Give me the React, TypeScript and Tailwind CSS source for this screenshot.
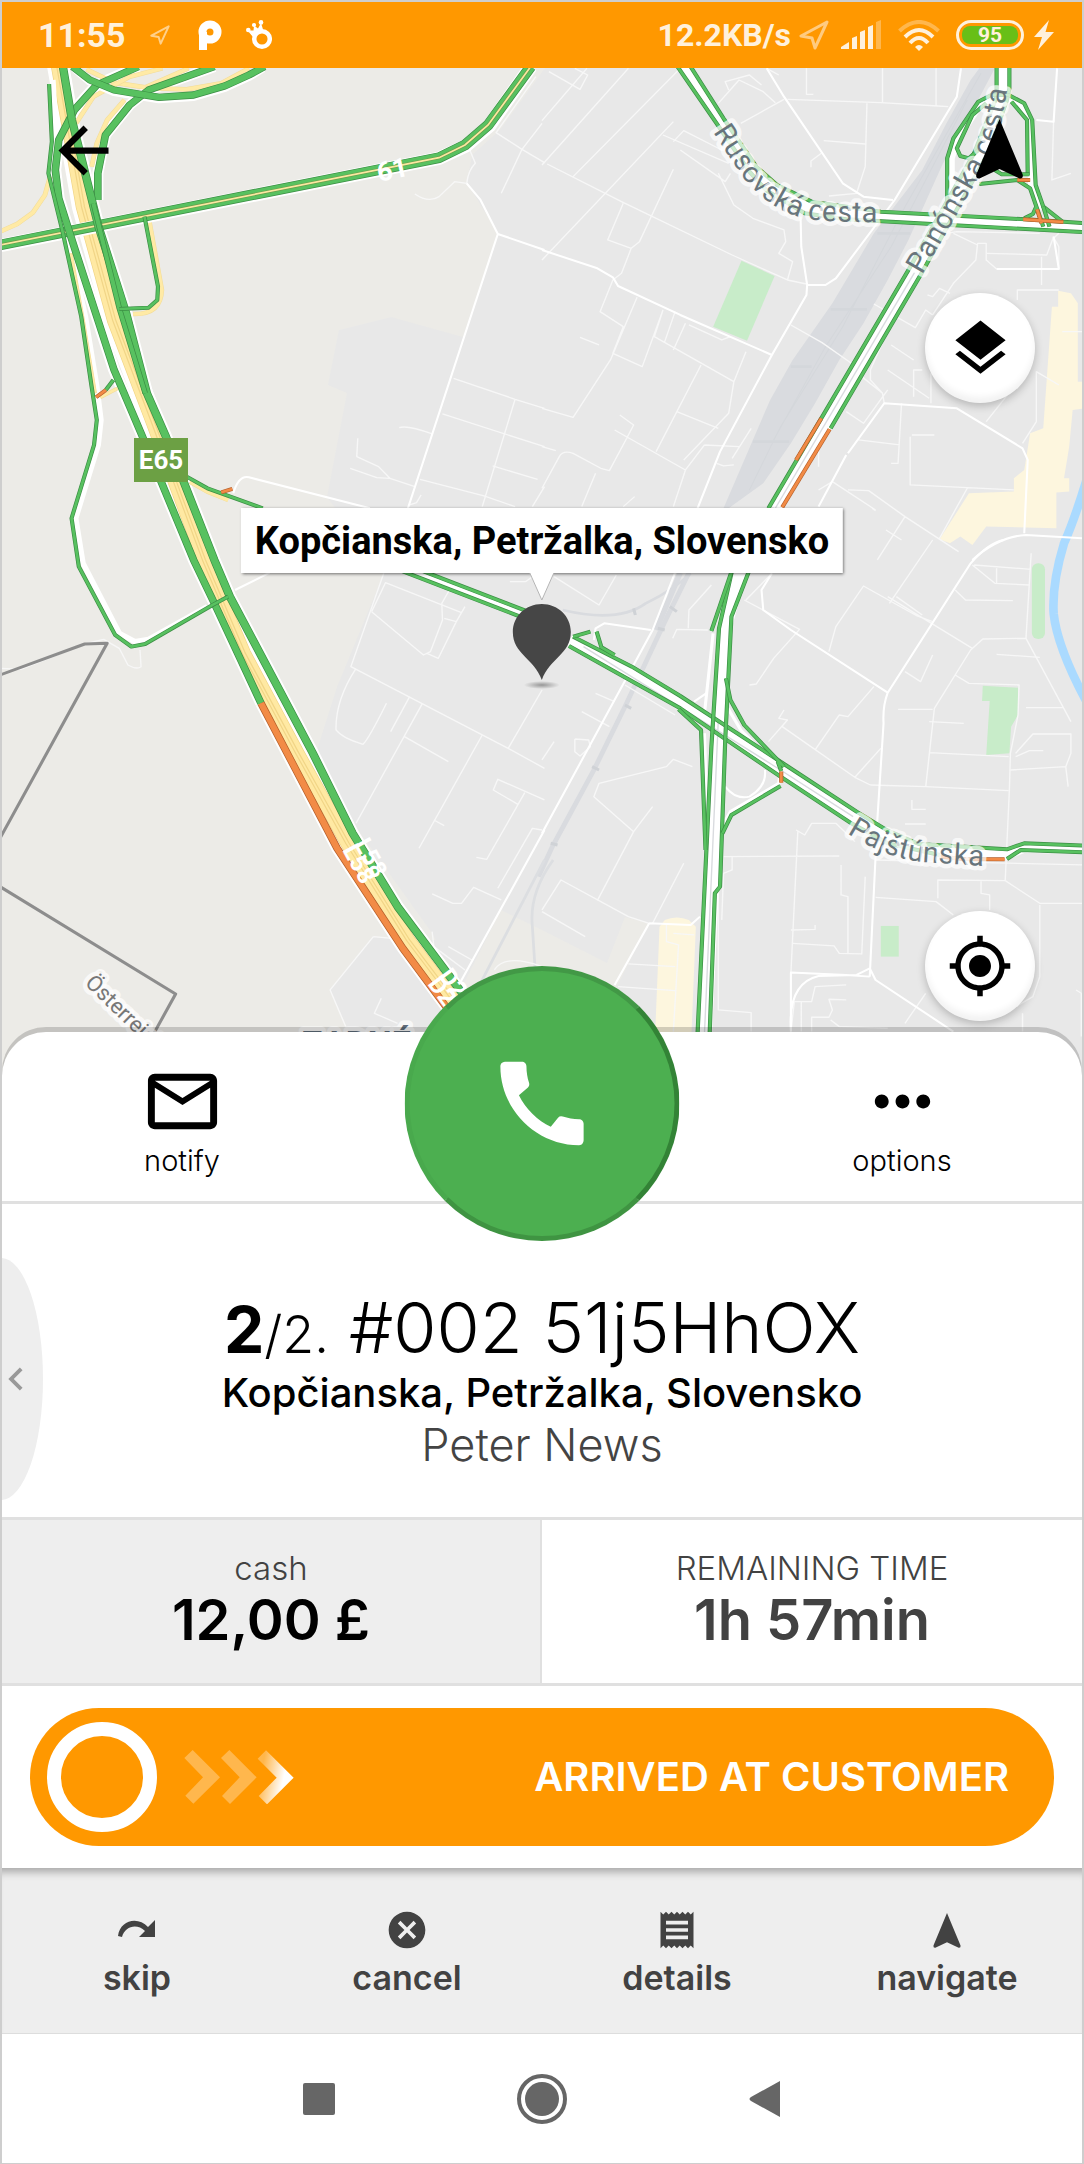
import React from "react";
import {
  MdArrowBack,
  MdCall,
  MdCancel,
  MdChevronLeft,
  MdLayers,
  MdMailOutline,
  MdMoreHoriz,
  MdMyLocation,
  MdReceipt,
} from "react-icons/md";

const GREEN = "#58c160";
const GREEN_EDGE = "#3b8d44";
const ORANGE = "#f28b46";
const ORANGE_EDGE = "#b5602b";

/* The map is drawn in four tiles, each with its own survey grid. */
const TILES = {
  nw: "translate(0 60) scale(0.3457 0.3333)",
  ne: "translate(542 60) scale(0.3457 0.3333)",
  sw: "translate(0 540) scale(0.3457 0.3333)",
  se: "translate(542 540) scale(0.3457 0.3333)",
};

/* Motorway lanes, in the north-west tile's grid */
const MEDIAN = "M160 -30 240 440 330 780 440 1080 590 1500 705 1780 860 2080 1005 2350 1180 2640 1450 3010";
const LANE_WEST = "M400 20 280 75 215 150 170 240 160 330 170 415 205 530 330 930 410 1125 560 1500 620 1630 755 1930";
const LANE_WEST_JAM = "M755 1930 975 2365 1165 2665 1290 2840 1440 3020";
const LANE_EAST = "M182 20 208 180 285 500 365 760 425 1000 480 1130 620 1500 665 1610 905 2080 1020 2320 1150 2540 1330 2790 1500 3020";
const LANE_RAMP = "M620 20 430 90 375 135 305 225 283 340 283 420";

type LineProps = { d: string; w?: number; jam?: boolean };

function Traffic({ d, w = 12, jam = false }: LineProps) {
  return (
    <g fill="none" strokeLinejoin="round">
      <path d={d} stroke={jam ? ORANGE_EDGE : GREEN_EDGE} strokeWidth={w} />
      <path d={d} stroke={jam ? ORANGE : GREEN} strokeWidth={w - 4} />
    </g>
  );
}

function Casing({ d, w = 12 }: LineProps) {
  return <path d={d} fill="none" stroke="#ffffff" strokeWidth={w} strokeLinejoin="round" />;
}

function Ramp({ d, w = 11 }: LineProps) {
  return (
    <g fill="none" strokeLinejoin="round">
      <path d={d} stroke="#f2dc9a" strokeWidth={w + 3} />
      <path d={d} stroke="#ffeaa5" strokeWidth={w} />
    </g>
  );
}

function MapCanvas() {
  return (
    <svg
      className="absolute inset-0 h-full w-full"
      viewBox="2 68 1080 1008"
      preserveAspectRatio="xMidYMid slice"
      aria-hidden="true"
    >
      <rect x="0" y="60" width="1084" height="1020" fill="#ecebe7" />
      <path
        d="M545 68 500 130 472 155 467 183 498 233 463 337 391 317 339 330 328 385 347 393 327 497 384 573 337 687 316 753 353 823 432 933 463 990 480 1080 1084 1080V68Z"
        fill="#e8e8e8"
      />
      <path d="M373 937 330 990 353 1040 353 1080 480 1080 440 940 400 940Z" fill="#e8e8e8" />
      <path d="M501 910 542 930 607 963 625 917 649 923 600 1020 463 1020 463 985Z" fill="#ecebe7" />

      {/* parks, built-up blocks and water */}
      <g transform={TILES.ne}>
        <path d="M577 602 673 648 593 842 495 800Z" fill="#c8ecc9" />
        <path
          d="M1493 692 1530 700 1550 730V965H1575V1045L1535 1050 1525 1160 1510 1255H1525V1295L1488 1298V1405L1285 1400 1245 1455 1210 1430 1180 1450 1150 1438 1235 1300 1365 1295V1255L1395 1230 1412 1120 1450 1105 1475 740H1493Z"
          fill="#fdf6de"
        />
        <path
          d="M1240 60 1265 25H1310L1200 240 1160 310 1060 540 1000 660 930 790 860 900 790 1030 720 1150 640 1270 540 1345H525L610 1140 660 1020 725 900 840 730 960 520 1100 330 1170 190Z"
          fill="#d9dbdf"
        />
        <g fill="none" stroke="#d4d7db" strokeWidth="3">
          <path d="M1270 40 1050 440 870 800 690 1100 600 1290M1230 120 1010 560 820 860 670 1140" />
          <path d="M835 748H940M970 520H1065M720 920H780M610 1145H715" strokeWidth="8" />
        </g>
      </g>
      <g transform={TILES.se}>
        <rect x="1417" y="70" width="38" height="227" rx="18" fill="#c8ecc9" />
        <path d="M1275 437 1377 443V525L1357 560 1352 640 1285 645 1295 483H1273Z" fill="#c8ecc9" />
        <rect x="980" y="1158" width="52" height="92" fill="#c8ecc9" />
        <path d="M355 1140Q390 1125 425 1140L445 1160 430 1540H325L340 1160Z" fill="#fdf6de" />
        <path d="M1575 -180Q1540 -60 1510 10 1475 130 1480 220 1490 320 1575 485" fill="none" stroke="#aadaff" strokeWidth="25" />
        <g fill="none" stroke="#d9dbdf" strokeWidth="14">
          <path d="M425 98 360 235 240 500 150 690 30 920 -10 1010" />
          <path d="M60 210Q220 250 300 190 380 150 430 100" strokeWidth="8" />
          <path d="M400 98 330 270" strokeWidth="16" />
        </g>
        <path d="M370 200 390 215M335 265 355 270M240 495 258 505M145 680 165 690M25 910 45 915M265 205 270 225" stroke="#cfd2d6" strokeWidth="9" />
      </g>
      <g transform={TILES.sw} fill="none" stroke="#dcdee1" strokeWidth="8">
        <path d="M1575 960 1460 1190 1380 1350M1600 960Q1530 1060 1540 1160L1548 1290" />
      </g>

      {/* side streets */}
      <g fill="none" stroke="#f7f7f7" strokeWidth="4" strokeLinejoin="round">
        <g transform={TILES.nw}>
          <path d="M1550 50 1435 218 1510 268 1575 308M1568 190 1510 268 1450 400" />
          <path d="M1350 370Q1355 330 1375 310L1355 260M1350 370 1315 365 1270 410Q1240 430 1200 402" />
          <path d="M1312 955 1490 1018 1575 1045M1280 1062 1575 1160M1490 1018 1395 1340M1155 1103Q1180 1095 1250 1122" />
          <path d="M1035 1135 1032 1190 1095 1220 1128 1255 1090 1253 1013 1225M1128 1255 1200 1280M1215 1258 1400 1308 1490 1340M1425 1218 1555 1258M1185 1335 1205 1328 1218 1305M1575 1280 1540 1340" />
        </g>
        <g transform={TILES.ne}>
          <path d="M250 25 0 315M400 25 90 350M0 182 130 25M20 35 110 88 132 45 95 25M15 312 230 425 550 585 710 660 765 672" />
          <path d="M380 185 0 600M350 225 540 310M380 245 410 212 520 270M400 270 530 365 545 340M510 340 555 435 610 475 700 510 705 545 685 580 725 605 710 660" />
          <path d="M235 430 190 540 258 565 282 545 380 328M258 565 230 640 205 660 168 755 235 800 205 880 290 920 350 750M275 712 198 900 90 1072 0 1045M110 832 165 855M350 750 325 830 555 965 590 875M460 915 330 1175M385 755 355 845M415 790 380 870M425 795 520 840 545 830M555 965 540 1060 410 1200" />
          <path d="M0 1160 40 1172M210 1110 415 1230M225 1065 265 1095 245 1135M390 1055 510 1105M245 1135 195 1232 170 1225 90 1180Q60 1170 50 1190L0 1285M415 1230 380 1340M470 1155 415 1230M505 1210 525 1218 555 1215M550 1195 605 1105M115 1340 155 1240M235 1340 268 1310M470 1155 570 1160" />
          <path d="M710 118 980 128 1145 138 1175 140M985 25V128M940 130 935 320 910 400 830 408M765 25V103H785M815 242 935 252M808 280 778 303V322M1140 25V138M575 190 700 118M510 130 570 60 640 95 675 128M540 90 530 65 600 45 635 75M650 25 685 45" />
          <path d="M720 795 810 848 895 910M960 732 1080 803 1110 750 1130 765M1115 705 1130 710 1150 685 1180 700M1130 765 1190 670 1255 600 1260 550H1285V600L1315 627M1010 790 950 930V960L985 1000 990 1030M925 950 985 1000M880 1055 930 1090 1000 990M1010 855 1075 900M1000 930 1120 1015M1075 1010V930H1100M1125 1030V940M1285 1085 1350 1000M1070 1125H1135M1040 1030 1030 1210H1010M915 1140 1035 1155" />
          <path d="M1495 625 1495 560 1478 530M1170 520 1200 515 1440 520M1190 520 1260 555M1285 580 1460 585 1480 530M1445 675V590M1480 535 1495 520M1375 720V690H1495M1430 1085V935L1495 975M1430 1085 1390 1150M1505 815H1568M1530 340 1475 360 1480 180M1065 1130 1065 1275 1365 1290M1230 1285 1150 1435M1050 1370 970 1500M885 1290 945 1292 1050 1370 1205 1475M800 1290 840 1265 965 1350M800 1140 800 1220M955 1345 965 1352M995 1410 1040 1440" />
        </g>
        <g transform={TILES.sw}>
          <path d="M1110 100 1015 380 1470 625 1575 685M1075 215 1115 128 1335 218M1075 215 1225 345 1245 335 1280 240 1278 190 1300 150M1235 340 1268 355 1320 245 1285 235M1320 245 1345 200M1030 385Q970 480 972 570 990 595 1050 613 1065 600 1118 490" />
          <path d="M1185 470 1130 575M1222 490 1030 850M1170 590 1297 665M1395 585 1212 925M1470 625 1568 450M1575 780 1440 718 1427 750 1498 793M1518 758 1408 958 1378 952M1255 840 1285 857M1568 870 1540 865 1440 1045M1250 1062 1310 1090 1335 1090 1370 1042 1450 1080" />
          <path d="M1250 1175 1255 1220 1345 1290M1297 1220 1365 1260M1080 1190 955 1350 1000 1460M1080 1190 1180 1200M1103 1375 1083 1420 1150 1450M1430 1290Q1460 1240 1568 1280M1475 125H1520L1540 110M0 385 60 388 250 310 300 298 345 325 370 375Q395 390 408 380L405 330" />
        </g>
        <g transform={TILES.se}>
          <path d="M35 110 165 195 215 105M490 135 425 210 423 265M378 295 390 268 480 270M590 180 665 100M585 180 745 268 670 355 620 432 600 435M830 335 850 260 930 138 1085 228 1130 245M1005 190 1130 0M1025 170 1100 225M1245 325 1000 170" />
          <path d="M1245 75 1310 130 1410 135M1250 75 1415 88M1315 130V85M1195 150 1225 180 1362 182M1400 295 1275 297 1240 330 1135 505 1110 740M1400 295 1530 545M1415 40 1400 295M1195 405 1235 430 1380 435 1377 525 1355 640 1352 750 1340 1020M1120 545 1220 550M1030 508H1130M1400 503H1510M1120 638 1350 650" />
          <path d="M1370 640 1420 582H1530V640L1515 680 1355 690M1515 680 1522 740M1370 650 1410 632H1450M1110 740 1350 752M950 735 1110 740M700 510 685 535 710 540 655 605M695 560 905 712 980 625M905 712 950 735M790 630 860 525 885 530 960 440M1315 343 1440 352M1050 395 1095 425 1130 345" />
          <path d="M1145 1075 1145 1020 1340 1022 1440 1090 1568 1090M965 1072 1140 1085 1190 1125M1270 1022V1060L1295 1065V1110M965 960 1568 975M525 950 860 948M550 950V990L525 1000 520 1140M740 875 720 1300M865 975V1065L885 1070V1240M735 870 760 885 780 850H850L905 905M1070 780V808H1110M1050 852H1110" />
          <path d="M725 1210 845 1218 860 1240 925 1242 935 1010M720 1170 790 1168V1155M0 1110 55 1020 250 1130 310 1150M0 1115 125 1190M160 1082 265 875 150 770 165 730 360 680 380 658 435 680M265 875 320 800M115 515 195 560M95 597 135 600 140 620 110 648 95 635V597M0 660 35 605M320 1150 410 970M155 460 210 485M240 435 385 525" />
          <path d="M510 1060V1410L605 1418V1475M720 1475 730 1385 780 1385 790 1340 880 1335M780 1475V1432H830L840 1410 830 1378 880 1380M750 1475V1385M835 1440 860 1460 1000 1465M1110 1360 1050 1450M1440 1095V1310L1420 1370 1370 1400M250 1272 385 1280M220 1340 385 1352M360 1155V1205L395 1215 380 1475M380 1180 440 1185M1545 1350 1560 1360V1490M1390 1420V1475" />
        </g>
      </g>

      {/* collector roads */}
      <g fill="none" stroke="#ffffff" strokeWidth="6" strokeLinejoin="round">
        <path transform={TILES.nw} d="M1350 370 1390 420 1440 522 1575 570M1440 522 1180 1345M675 1300Q690 1245 720 1252L1070 1345" />
        <path transform={TILES.ne} d="M0 570 160 625 205 652 220 678 400 765 665 885M665 885 765 705 767 675 750 560 748 470M767 675H820L850 655 1020 420 1200 110 1212 25M650 25 700 110 870 370 930 410 1015 420M665 885 515 1175 450 1345M1490 25 1480 185 1430 180M885 1180 990 1030 1200 1045 1390 1165 1405 1200 1395 1420M880 1185 800 1340M1245 1500Q1320 1430 1400 1425L1568 1435M1315 627 1495 627 1480 530" />
        <path transform={TILES.sw} d="M1575 870 1330 1330M680 150 780 98" />
        <path transform={TILES.se} d="M385 98 320 270 0 880M665 100 635 150 640 210 720 270 1000 458 1240 70Q1290 10 1335 0M1000 458Q985 500 988 550L970 840 948 1310M310 1150 210 1335M310 1150 430 1155 457 1130M150 300 155 265 180 250 315 270M720 1475Q710 1330 800 1308L910 1305 948 1285 965 1320 1190 1475M948 1310 880 1305 720 1298V1475M530 740Q560 780 600 770 650 740 645 690M440 485 475 460" />
      </g>

      {/* national border */}
      <g transform={TILES.sw} fill="none" stroke="#8d8d8d" strokeWidth="9" strokeLinejoin="round">
        <path d="M0 405 245 312 310 310 0 895M0 1040 508 1362 440 1490" />
      </g>

      {/* motorway */}
      <g transform={TILES.nw}>
        <Casing d={MEDIAN} w={64} />
        <Casing d={LANE_WEST} w={34} />
        <Casing d={LANE_WEST_JAM} w={34} />
        <Casing d={LANE_EAST} w={36} />
        <Casing d={LANE_RAMP} w={32} />
        <g fill="none" strokeLinejoin="round">
          <path d={MEDIAN} stroke="#f1d587" strokeWidth="42" />
          <path d={MEDIAN} stroke="#ffe9a3" strokeWidth="38" />
          <path d={MEDIAN} stroke="#f1d587" strokeWidth="12" />
          <path d={MEDIAN} stroke="#ffe9a3" strokeWidth="5" />
        </g>
        <Casing d="M153 60 163 245 155 340 192 510 247 770 280 980 292 1080 284 1155 219 1375 240 1510 345 1720 390 1745 430 1738 600 1640" w={16} />
        <Ramp d="M0 515 50 492 95 458 130 405 145 350" />
        <Ramp d="M250 28 330 68 420 82 545 25" />
        <Ramp d="M470 25 375 50 270 110 220 190" />
        <Ramp d="M720 25 640 70 540 88 420 84" />
        <Ramp d="M360 120 310 180 280 250 265 320" />
        <Ramp d="M432 485 468 690Q465 765 385 762" />
        <Ramp d="M205 580 240 780 275 1000M290 1012 340 985" w={8} />
        <Ramp d="M550 1265 600 1295 660 1320" />
        <Casing d="M0 557 1270 295 1347 258 1415 198 1535 20" w={40} />
        <Traffic d="M0 555 1270 293 1345 255 1412 195 1535 20" w={32} />
        <path d="M0 555 1270 293 1345 255 1412 195 1535 20" fill="none" stroke="#6b9a4b" strokeWidth="9" />
        <path d="M0 555 1270 293 1345 255 1412 195 1535 20" fill="none" stroke="#fbe8a0" strokeWidth="5" />
        <Casing d="M215 24 260 64 330 95 460 117 560 110 650 83 720 50 760 24" w={26} />
        <Traffic d={LANE_WEST} w={22} />
        <Traffic d={LANE_RAMP} w={22} />
        <Traffic d={LANE_EAST} w={24} />
        <Traffic d="M270 430 345 745 420 1000" w={16} />
        <Traffic d="M210 20 260 60 330 90 460 112 560 105 650 78 720 45 765 20" w={22} />
        <Traffic d={LANE_WEST_JAM} w={22} jam />
        <Traffic d="M142 72 150 245 140 340 180 510 235 770 265 980 280 1080 272 1155 207 1375 228 1520 333 1725 380 1760 420 1752 615 1635 660 1610" />
        <Traffic d="M418 470 457 680 455 720 430 743 345 747" />
        <Traffic d="M328 960 306 990" />
        <Traffic d="M306 990 278 1012" jam />
        <Traffic d="M540 1250 600 1285 760 1345" />
        <Traffic d="M640 1297 672 1287" jam />
      </g>

      {/* Kopčianska / Pajštúnska */}
      <g transform={TILES.sw}>
        <Casing d="M1195 92 1510 220" w={22} />
        <Traffic d="M1160 92 1510 232" />
        <Traffic d="M1220 92 1520 212" />
      </g>
      <g transform={TILES.se}>
        <Casing d="M80 300 400 485 700 690 910 835 1000 890 1100 930 1345 942 1395 922 1575 927" w={32} />
        <Casing d="M572 90 530 250 510 600 470 1480" w={44} />
        <Casing d="M535 500 575 570 690 690 685 730 545 815 520 860M495 280 470 520M470 580 480 930" w={9} />
        <path d="M120 320 690 690 900 830M510 540 470 1480" fill="none" stroke="#d9dbdf" strokeWidth="4" />
        <Traffic d="M90 290 260 380 400 468 700 672 910 815 1000 872 1090 912 1345 928 1395 910 1575 917" />
        <Traffic d="M78 318 400 505 690 710 895 850 1000 910 1150 945" />
        <Traffic d="M90 290 140 275" />
        <Traffic d="M158 275 172 322 210 345" />
        <Traffic d="M550 90 512 265 490 620 450 1480" />
        <Traffic d="M550 90 490 273" />
        <Traffic d="M600 90 548 230 530 600 515 1040 500 1060 485 1480" />
        <Traffic d="M532 415 545 480 585 555 700 680M682 665 692 693" />
        <Traffic d="M692 695V728" jam />
        <Traffic d="M690 738 548 825 522 880" />
        <Traffic d="M395 508 460 570 473 930" />
        <Traffic d="M1150 950 1220 957 1338 958" jam />
        <Traffic d="M1345 957 1385 930 1575 937" />
      </g>

      {/* Rusovská cesta / Panónska cesta */}
      <g transform={TILES.ne}>
        <Casing d="M411 20 515 180 610 325 665 382 770 443 880 462 1180 480 1575 503" w={32} />
        <Casing d="M1333 20V120L1270 280 1078 637 675 1345" w={40} />
        <Casing d="M1184 425V295L1200 240 1270 130 1300 117H1350L1388 140 1410 185 1416 375 1440 450" w={20} />
        <path d="M1078 637 675 1345" fill="none" stroke="#d9dbdf" strokeWidth="4" />
        <Traffic d="M392 20 505 190 600 335 650 392 760 460 880 478 1180 495 1575 517" />
        <Traffic d="M430 20 525 175 620 320 680 375 780 425 980 455 1400 478 1575 490" />
        <Traffic d="M1315 20V110L1250 280 1060 630 655 1345" />
        <Traffic d="M1352 20V85L1345 120 1290 280 1095 645 1030 760 835 1105" />
        <Traffic d="M808 1075 735 1200" jam />
        <Traffic d="M832 1108 695 1342" jam />
        <Traffic d="M1172 430V295L1190 235 1262 125 1300 105 1350 105 1395 130 1418 180 1428 375 1450 440 1505 485" />
        <Traffic d="M1285 130 1245 165 1200 265 1210 288 1235 295 1262 270" />
        <Traffic d="M1358 125 1403 180 1405 345" />
        <Traffic d="M1265 372 1375 360 1412 385 1450 500M1395 475 1420 462 1430 440M1450 440 1468 500M1310 330 1330 343H1410" />
        <Traffic d="M1375 360H1412M1392 478 1508 486M1432 448 1445 490" jam />
      </g>

      {/* labels */}
      <defs>
        <path id="rusovska" d="M713 132 742 176Q766 206 796 216L820 221 910 223" />
        <path id="panonska" d="M922 275 981 173Q996 147 1001 125L1011 68" />
        <path id="pajstunska" d="M847 833Q885 858 922 862L1000 867" />
      </defs>
      <g
        fontFamily="Roboto, sans-serif"
        fill="#68757c"
        stroke="#ffffff"
        strokeOpacity="0.7"
        strokeWidth="9"
        strokeLinejoin="round"
        paintOrder="stroke"
        fontSize="29"
      >
        <text><textPath href="#rusovska">Rusovská cesta</textPath></text>
        <text><textPath href="#panonska">Panónska cesta</textPath></text>
        <text><textPath href="#pajstunska">Pajštúnska</textPath></text>
        <text fontSize="22" fill="#777777" transform="translate(84 984) rotate(44)">Österreich</text>
        <text x="302" y="1055" fontSize="34" fontWeight="700" fill="#5d6b79">ZADNÉ</text>
      </g>
      <g fontFamily="Roboto, sans-serif" fill="#ffffff" fontWeight="700" fontSize="24">
        <text transform="translate(379 182) rotate(-12)" fontSize="27">61</text>
        <text transform="translate(342 850) rotate(61)" fontSize="24">L58</text>
        <text transform="translate(354 844) rotate(61)" fontSize="24">L58</text>
        <text transform="translate(427 984) rotate(54)">D2</text>
        <text transform="translate(438 976) rotate(54)">D2</text>
        <rect x="134" y="438" width="54" height="44" fill="#6ca044" />
        <text x="161" y="469" textAnchor="middle" fontSize="26">E65</text>
      </g>
    </svg>
  );
}

function NavigationGlyph({ className }: { className: string }) {
  return (
    <svg className={className} viewBox="0 0 47 60" fill="currentColor" aria-hidden="true">
      <path d="M23.500 0 46.700 55.500Q47.500 60 43.500 59.500L23.500 50 3.500 59.500Q-.500 60 .300 55.500Z" />
    </svg>
  );
}

function SendOutline({ className }: { className: string }) {
  return (
    <svg className={className} viewBox="0 0 30 30" fill="none" stroke="currentColor" strokeWidth="3" strokeLinejoin="round" aria-hidden="true">
      <path d="M28 2 2 16 13 18 16 28Z" />
    </svg>
  );
}

function StatusBar() {
  return (
    <header className="flex h-[66px] items-center justify-between bg-[#ff9800] pr-7 pl-9 font-['Roboto',sans-serif] font-bold text-[#fff1dc]">
      <div className="flex items-center">
        <span className="text-[34px]">11:55</span>
        <SendOutline className="ml-6 size-5 text-[#ffd08a]" />
        <svg className="ml-7 h-[30px] w-6" viewBox="0 0 24 30" aria-hidden="true">
          <circle cx="12" cy="12" r="7.500" fill="none" stroke="#fff" strokeWidth="8" />
          <path d="M1 12H9V30H1Z" fill="#fff" />
        </svg>
        <svg className="ml-6 h-[30px] w-[26px]" viewBox="0 0 26 30" fill="#fff" aria-hidden="true">
          <circle cx="16" cy="19" r="7.800" fill="none" stroke="#fff" strokeWidth="4.500" />
          <path d="M7 17 1.500 10.500 7.500 10.500 8 5.500 12 8.500 15 3 17.500 11Z" />
          <circle cx="2.300" cy="10" r="2.300" />
          <circle cx="8" cy="5" r="2.100" />
          <circle cx="15" cy="2.400" r="2.300" />
        </svg>
      </div>
      <div className="flex items-center">
        <span className="text-[32px]">12.2KB/s</span>
        <SendOutline className="ml-2 size-[30px] text-[#ffcb80]" />
        <svg className="ml-3 h-[30px] w-[41px]" viewBox="0 0 41 30" fill="currentColor" aria-hidden="true">
          <path d="M0 29V27L8 22V29ZM11 18 16 16V29H11ZM19 12 24 10V29H19ZM27 7 32 5V29H27Z" />
          <path d="M35 2 40 0V29H35Z" opacity="0.350" />
        </svg>
        <svg className="ml-4 h-[31px] w-[42px]" viewBox="0 0 42 31" fill="none" stroke="currentColor" strokeWidth="4" aria-hidden="true">
          <path d="M1.500 11Q21 -7 40.500 11" opacity="0.350" />
          <path d="M7 17Q21 3 35 17M12 23Q21 13 30 23" />
          <path d="M17 27Q21 23 25 27L21 31Z" fill="currentColor" stroke="none" />
        </svg>
        <span className="ml-4 flex h-[30px] w-[68px] items-center rounded-full border-3 border-current p-[3px]">
          <span className="flex h-full w-full items-center justify-center rounded-lg bg-[#68bf17] text-[21px] leading-none">95</span>
        </span>
        <svg className="ml-2.5 h-[30px] w-5" viewBox="0 0 20 30" fill="currentColor" aria-hidden="true">
          <path d="M15 0 0 17H8L4 30 20 12H11.500Z" />
        </svg>
      </div>
    </header>
  );
}

const roundButton =
  "absolute right-[47px] flex size-[110px] items-center justify-center rounded-full bg-white text-black shadow-[inset_0_-6px_6px_rgba(0,0,0,0.05),0_3px_8px_rgba(0,0,0,0.22)]";

function MapSection() {
  return (
    <section aria-label="Map" className="relative h-[1008px] overflow-hidden">
      <MapCanvas />
      <button type="button" aria-label="Back" className="absolute top-[45px] left-11 text-black">
        <MdArrowBack size={75} />
      </button>
      <button type="button" aria-label="North" className="absolute top-[51px] right-[59px] text-black">
        <NavigationGlyph className="h-[60px] w-[47px]" />
      </button>
      <button type="button" aria-label="Layers" className={`${roundButton} top-[225px]`}>
        <MdLayers size={67} />
      </button>
      <button type="button" aria-label="My location" className={`${roundButton} top-[843px]`}>
        <MdMyLocation size={66} />
      </button>
      <div className="absolute top-[440px] left-1/2 flex -translate-x-1/2 flex-col items-center">
        <div className="bg-white px-3.5 pt-0.5 font-['Roboto',sans-serif] text-[38px] leading-[63px] font-bold whitespace-nowrap text-black shadow-[1px_1px_3px_rgba(0,0,0,0.55)]">
          Kopčianska, Petržalka, Slovensko
        </div>
        <svg className="h-[118px] w-[60px]" viewBox="0 0 60 118" aria-hidden="true">
          <defs>
            <radialGradient id="pin-shadow">
              <stop offset="0" stopOpacity="0.350" />
              <stop offset="1" stopOpacity="0" />
            </radialGradient>
          </defs>
          <ellipse cx="30" cy="112" rx="18" ry="4" fill="url(#pin-shadow)" />
          <path d="M18 0 30 27 42 0" fill="#fff" stroke="#b5b5b5" strokeWidth="1" />
          <path d="M1 59C1 43 14 31 30 31S59 43 59 59C59 81 38 85 30 107 22 85 1 81 1 59Z" fill="#464646" />
        </svg>
      </div>
    </section>
  );
}

function SheetHeader() {
  return (
    <div className="relative grid grid-cols-3 border-b-3 border-[#e0e0e0] pt-7 pb-[22px] text-[29px] leading-9 font-light text-black">
      <button type="button" className="flex flex-col items-center">
        <MdMailOutline size={83} />
        notify
      </button>
      <button
        type="button"
        aria-label="Call"
        className="absolute -top-[66px] left-1/2 flex size-[275px] -translate-x-1/2 items-center justify-center rounded-full border-5 border-t-[#429846] border-r-[#338336] border-b-[#3f9442] border-l-[#49a94d] bg-[#4caf50] text-white"
      >
        <MdCall size={111} />
      </button>
      <button type="button" className="col-start-3 flex flex-col items-center">
        <MdMoreHoriz size={83} />
        options
      </button>
    </div>
  );
}

function OrderInfo() {
  return (
    <div className="relative overflow-hidden border-b-3 border-[#e0e0e0] pt-[87px] pb-12 text-center">
      <button
        type="button"
        aria-label="Previous"
        className="absolute top-[54px] -left-[43px] flex h-[242px] w-[84px] items-center justify-end rounded-[50%] bg-[#eeeeee] text-[#999999]"
      >
        <MdChevronLeft size={46} className="mr-1" />
      </button>
      <h1 className="flex h-[74px] items-baseline justify-center text-[70px] leading-[74px] font-light text-black">
        <span className="text-[64px] leading-none font-bold">2</span>
        <span className="text-[52px] leading-none">/2.</span>
        <span className="ml-5">#002 51j5HhOX</span>
      </h1>
      <p className="text-[40px] leading-14 font-medium text-black">Kopčianska, Petržalka, Slovensko</p>
      <p className="text-[45px] leading-12 font-light text-[#444444]">Peter News</p>
    </div>
  );
}

function Totals() {
  return (
    <dl className="grid grid-cols-2 border-b-3 border-[#e0e0e0] text-center">
      <div className="border-r-2 border-[#e0e0e0] bg-[#eeeeee] pt-7 pb-[31px]">
        <dt className="text-[33px] leading-10 font-light text-[#424242]">cash</dt>
        <dd className="text-[56px] leading-16 font-semibold text-black">12,00 £</dd>
      </div>
      <div className="pt-7 pb-[31px]">
        <dt className="text-[33px] leading-10 font-light text-[#424242]">REMAINING TIME</dt>
        <dd className="text-[56px] leading-16 font-semibold text-[#424242]">1h 57min</dd>
      </div>
    </dl>
  );
}

function ArrivedSlider() {
  return (
    <div className="px-7 py-[22px]">
      <button type="button" className="flex h-[138px] w-full items-center rounded-full bg-[#ff9800] pr-[45px] pl-[17px] text-white">
        <span className="size-[110px] rounded-full border-14 border-white" />
        <svg className="ml-[27px] h-[54px] w-[110px]" viewBox="492 146 328 162" aria-hidden="true">
          <defs>
            <linearGradient id="lead" x1="0" x2="1" y1="0.200" y2="0.500">
              <stop offset="0.150" stopColor="#fff" stopOpacity="0.300" />
              <stop offset="0.750" stopColor="#fff" />
            </linearGradient>
          </defs>
          <path d="M492 170 517 146 599 228 519 307 495 283 548 228ZM602 170 627 146 709 228 629 308 605 284 658 228Z" fill="#fff" opacity="0.300" />
          <path d="M712 172 737 147 820 229 740 309 715 284 769 229Z" fill="url(#lead)" />
        </svg>
        <span className="ml-auto text-[40px] font-semibold">ARRIVED AT CUSTOMER</span>
      </button>
    </div>
  );
}

function ActionBar() {
  const item = "flex flex-col items-center gap-1.5";
  return (
    <nav
      aria-label="Order actions"
      className="grid grid-cols-4 border-b border-[#dddddd] bg-[#eeeeee] pt-10 pb-[35px] text-[34px] leading-10 font-semibold text-[#424242] shadow-[inset_0_11px_9px_-7px_rgba(0,0,0,0.3)]"
    >
      <button type="button" className={item}>
        <svg className="size-11" viewBox="0 0 44 44" fill="currentColor" aria-hidden="true">
          <path d="M3 28C5 12 23 8 33 19L40 12V29H24L30 23C22 15 10 18 7 29Z" />
        </svg>
        skip
      </button>
      <button type="button" className={item}>
        <MdCancel size={44} />
        cancel
      </button>
      <button type="button" className={item}>
        <MdReceipt size={44} />
        details
      </button>
      <button type="button" className={item}>
        <span className="flex h-11 items-center">
          <NavigationGlyph className="h-[35px] w-7" />
        </span>
        navigate
      </button>
    </nav>
  );
}

function SystemNav() {
  return (
    <nav aria-label="System" className="flex h-[129px] items-center justify-center gap-[182px] bg-white text-[#666666]">
      <button type="button" aria-label="Recent apps" className="size-8 rounded-xs bg-current" />
      <button type="button" aria-label="Home" className="flex size-[50px] items-center justify-center rounded-full border-4 border-current">
        <span className="size-[34px] rounded-full bg-[#666666]" />
      </button>
      <button type="button" aria-label="Back to previous screen">
        <svg className="h-9 w-8" viewBox="0 0 32 36" fill="currentColor" aria-hidden="true">
          <path d="M31 0V36L2 20Q-1 18 2 16Z" />
        </svg>
      </button>
    </nav>
  );
}

export default function App() {
  return (
    <div className="border-2 border-[#cecece] bg-white font-['Inter','Noto_Sans',sans-serif]">
      <StatusBar />
      <main>
        <MapSection />
        <section
          aria-label="Order"
          className="relative -mt-11 rounded-t-[44px] bg-white shadow-[0_-5px_0_rgba(0,0,0,0.17)]"
        >
          <SheetHeader />
          <OrderInfo />
          <Totals />
          <ArrivedSlider />
        </section>
      </main>
      <ActionBar />
      <SystemNav />
    </div>
  );
}
